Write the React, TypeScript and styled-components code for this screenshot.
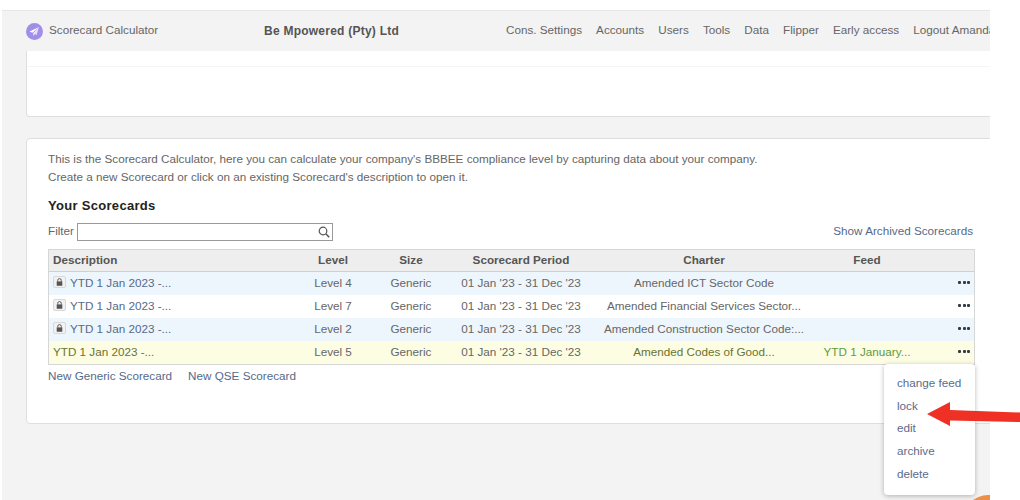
import React from "react";
import styled, { createGlobalStyle } from "styled-components";

const GlobalStyle = createGlobalStyle`
  html, body {
    margin: 0;
    background: #fff;
    font-family: "Liberation Sans", Arial, sans-serif;
    font-size: 11.7px;
    overflow: hidden;
  }
`;

const Page = styled.div`
  position: relative;
  width: 1020px;
  height: 500px;
  padding: 10px 0 0 2px;
  box-sizing: border-box;
  overflow: hidden;
`;

const Frame = styled.div`
  position: relative;
  width: 988px;
  height: 490px;
  overflow: hidden;
  background: #f3f3f3;
  border-top: 1px solid #e6e6e6;
  box-sizing: border-box;
`;

const Header = styled.header`
  display: flex;
  align-items: center;
  height: 40px;
  padding-left: 24px;
  color: #666;
  white-space: nowrap;
`;

const Brand = styled.div`
  display: flex;
  align-items: center;
  gap: 6px;
  width: 238px;
  flex-shrink: 0;
  padding-bottom: 3px;
  svg {
    margin-top: 4px;
  }
`;

const Company = styled.div`
  width: 242px;
  flex-shrink: 0;
  font-weight: 700;
  font-size: 12px;
  letter-spacing: 0.24px;
  color: #555;
`;

const Nav = styled.nav`
  display: flex;
  gap: 14.1px;
  flex-shrink: 0;
  padding-bottom: 3px;
`;

const Card = styled.section`
  width: 1000px;
  margin-left: 24px;
  background: #fff;
  border: 1px solid #dedede;
  border-radius: 4px;
  box-sizing: border-box;
`;

const TopCard = styled(Card)`
  height: 66px;
  border-top: none;
  border-top-left-radius: 0;
  border-top-right-radius: 0;
`;

const TopDivider = styled.div`
  height: 15px;
  border-bottom: 1px solid #f5f5f5;
`;

const MainCard = styled(Card)`
  position: relative;
  height: 286px;
  margin-top: 21px;
  padding: 11px 0 0 21px;
`;

const Content = styled.div`
  position: relative;
  width: 927px;
  color: #666;
`;

const Intro = styled.p`
  margin: 0;
  line-height: 18px;
  color: #666;
`;

const Heading = styled.h2`
  margin: 11px 0 0;
  font-size: 13px;
  line-height: 18px;
  letter-spacing: 0.3px;
  font-weight: 700;
  color: #222;
`;

const FilterRow = styled.div`
  display: flex;
  align-items: flex-start;
  justify-content: space-between;
  height: 18px;
  margin-top: 8px;
  padding-right: 2px;
  line-height: 16px;
`;

const FilterGroup = styled.label`
  display: flex;
  align-items: flex-start;
  gap: 3px;
  color: #666;
`;

const FilterBox = styled.div`
  display: flex;
  align-items: center;
  justify-content: flex-end;
  width: 256px;
  height: 18px;
  padding-right: 2px;
  background: #fff;
  border: 1px solid #999;
  box-sizing: border-box;
`;

const Link = styled.a`
  color: #566a88;
  text-decoration: none;
`;

const Table = styled.div`
  margin-top: 8px;
  border: 1px solid #d6d6d6;
  box-sizing: border-box;
`;

const Row = styled.div<{ $bg: string }>`
  display: grid;
  grid-template-columns: 247px 74px 82px 138px 228px 98px 58px;
  align-items: center;
  height: 23px;
  padding-bottom: 2px;
  box-sizing: border-box;
  background: ${(p) => p.$bg};
`;

const HeadRow = styled(Row)`
  height: 22px;
  padding-bottom: 2px;
  border-bottom: 1px solid #d0d0d0;
  font-weight: 700;
  color: #555;
`;

const Cell = styled.div<{ $color?: string }>`
  text-align: center;
  white-space: nowrap;
  color: ${(p) => p.$color || "#666"};
`;

const DescCell = styled.div`
  display: flex;
  align-items: center;
  gap: 4px;
  padding-left: 4px;
  white-space: nowrap;
  color: #566a88;
`;

const HeadDesc = styled(DescCell)`
  color: #555;
`;

const YellowDesc = styled(DescCell)`
  color: #6b7330;
`;

const LockBox = styled.span`
  display: inline-flex;
  align-items: center;
  justify-content: center;
  width: 13px;
  height: 12px;
  margin-top: -1px;
  background: #f2f2f2;
  border: 1px solid #d8d8d8;
  border-radius: 2px;
  box-sizing: border-box;
`;

const Dots = styled.div`
  display: flex;
  justify-content: flex-end;
  gap: 1.5px;
  padding-right: 4px;
  span {
    width: 3px;
    height: 3px;
    border-radius: 1px;
    background: #333a4a;
  }
`;

const FootLinks = styled.div`
  display: flex;
  gap: 16px;
  margin-top: 2px;
  line-height: 18px;
`;

const Menu = styled.div`
  position: absolute;
  top: 214px;
  right: 0;
  width: 91px;
  height: 131px;
  padding-top: 8px;
  background: #fff;
  border-radius: 4px;
  box-shadow: 0 1px 5px rgba(0, 0, 0, 0.28);
  box-sizing: border-box;
  z-index: 2;
`;

const MenuItem = styled.div`
  height: 22.7px;
  line-height: 22.7px;
  padding-left: 13px;
  color: #5b6c8c;
`;

const ChatBubble = styled.div`
  position: absolute;
  left: 961px;
  top: 484px;
  width: 50px;
  height: 50px;
  border-radius: 50%;
  background: #ee8f45;
`;

const ArrowOverlay = styled.svg`
  position: absolute;
  left: 920px;
  top: 395px;
  z-index: 3;
`;

const PlaneLogo = () => (
  <svg width="17" height="17" viewBox="0 0 17 17">
    <circle cx="8.5" cy="8.5" r="8.5" fill="#a08ee8" />
    <path d="M13 4 L3.6 8.4 L6.4 9.8 Z" fill="#fff" />
    <path d="M13 4 L7 10.2 L7.4 13 L9 11 L10.6 12 Z" fill="#e6e0fa" />
  </svg>
);

const SearchIcon = () => (
  <svg width="12" height="12" viewBox="0 0 12 12" fill="none" stroke="#555" strokeWidth="1.2">
    <circle cx="5" cy="5" r="3.8" />
    <path d="M7.8 7.8 L11.2 11.2" strokeWidth="1.5" />
  </svg>
);

const LockIcon = () => (
  <svg width="7" height="8" viewBox="0 0 8 9">
    <path d="M2 4 V2.6 a2 2 0 0 1 4 0 V4" fill="none" stroke="#555" strokeWidth="1.1" />
    <rect x="0.8" y="3.8" width="6.4" height="5" fill="#555" />
  </svg>
);

const navItems = ["Cons. Settings", "Accounts", "Users", "Tools", "Data", "Flipper", "Early access", "Logout Amanda"];
const menuItems = ["change feed", "lock", "edit", "archive", "delete"];

const scorecards = [
  { level: "Level 4", charter: "Amended ICT Sector Code", feed: "", bg: "#eef6fd", locked: true },
  { level: "Level 7", charter: "Amended Financial Services Sector...", feed: "", bg: "#fff", locked: true },
  { level: "Level 2", charter: "Amended Construction Sector Code:...", feed: "", bg: "#eef6fd", locked: true },
  { level: "Level 5", charter: "Amended Codes of Good...", feed: "YTD 1 January...", bg: "#fdfde4", locked: false },
];

export default function App() {
  return (
    <>
      <GlobalStyle />
      <Page>
        <Frame>
          <Header>
            <Brand>
              <PlaneLogo />
              Scorecard Calculator
            </Brand>
            <Company>Be Mpowered (Pty) Ltd</Company>
            <Nav>
              {navItems.map((item) => (
                <span key={item}>{item}</span>
              ))}
            </Nav>
          </Header>
          <TopCard>
            <TopDivider />
          </TopCard>
          <MainCard>
            <Content>
              <Intro>
                This is the Scorecard Calculator, here you can calculate your company's BBBEE compliance level by capturing data about your company.
                <br />
                Create a new Scorecard or click on an existing Scorecard's description to open it.
              </Intro>
              <Heading>Your Scorecards</Heading>
              <FilterRow>
                <FilterGroup>
                  Filter
                  <FilterBox>
                    <SearchIcon />
                  </FilterBox>
                </FilterGroup>
                <Link>Show Archived Scorecards</Link>
              </FilterRow>
              <Table>
                <HeadRow $bg="#eeeeee">
                  <HeadDesc>Description</HeadDesc>
                  <Cell $color="#555">Level</Cell>
                  <Cell $color="#555">Size</Cell>
                  <Cell $color="#555">Scorecard Period</Cell>
                  <Cell $color="#555">Charter</Cell>
                  <Cell $color="#555">Feed</Cell>
                  <div />
                </HeadRow>
                {scorecards.map((s) => {
                  const Desc = s.locked ? DescCell : YellowDesc;
                  return (
                    <Row key={s.level} $bg={s.bg}>
                      <Desc>
                        {s.locked && (
                          <LockBox>
                            <LockIcon />
                          </LockBox>
                        )}
                        YTD 1 Jan 2023 -...
                      </Desc>
                      <Cell>{s.level}</Cell>
                      <Cell>Generic</Cell>
                      <Cell>01 Jan '23 - 31 Dec '23</Cell>
                      <Cell $color={s.locked ? "#666" : "#6b7330"}>{s.charter}</Cell>
                      <Cell $color="#5f9a3c">{s.feed}</Cell>
                      <Dots>
                        <span />
                        <span />
                        <span />
                      </Dots>
                    </Row>
                  );
                })}
              </Table>
              <FootLinks>
                <Link>New Generic Scorecard</Link>
                <Link>New QSE Scorecard</Link>
              </FootLinks>
              <Menu>
                {menuItems.map((item) => (
                  <MenuItem key={item}>{item}</MenuItem>
                ))}
              </Menu>
            </Content>
          </MainCard>
          <ChatBubble />
        </Frame>
        <ArrowOverlay width="100" height="40" viewBox="0 0 100 40">
          <path d="M7 19 L30 7 L30 15 L100 17.5 L100 27 L30 25.5 L30 31 Z" fill="#ee3124" />
        </ArrowOverlay>
      </Page>
    </>
  );
}
